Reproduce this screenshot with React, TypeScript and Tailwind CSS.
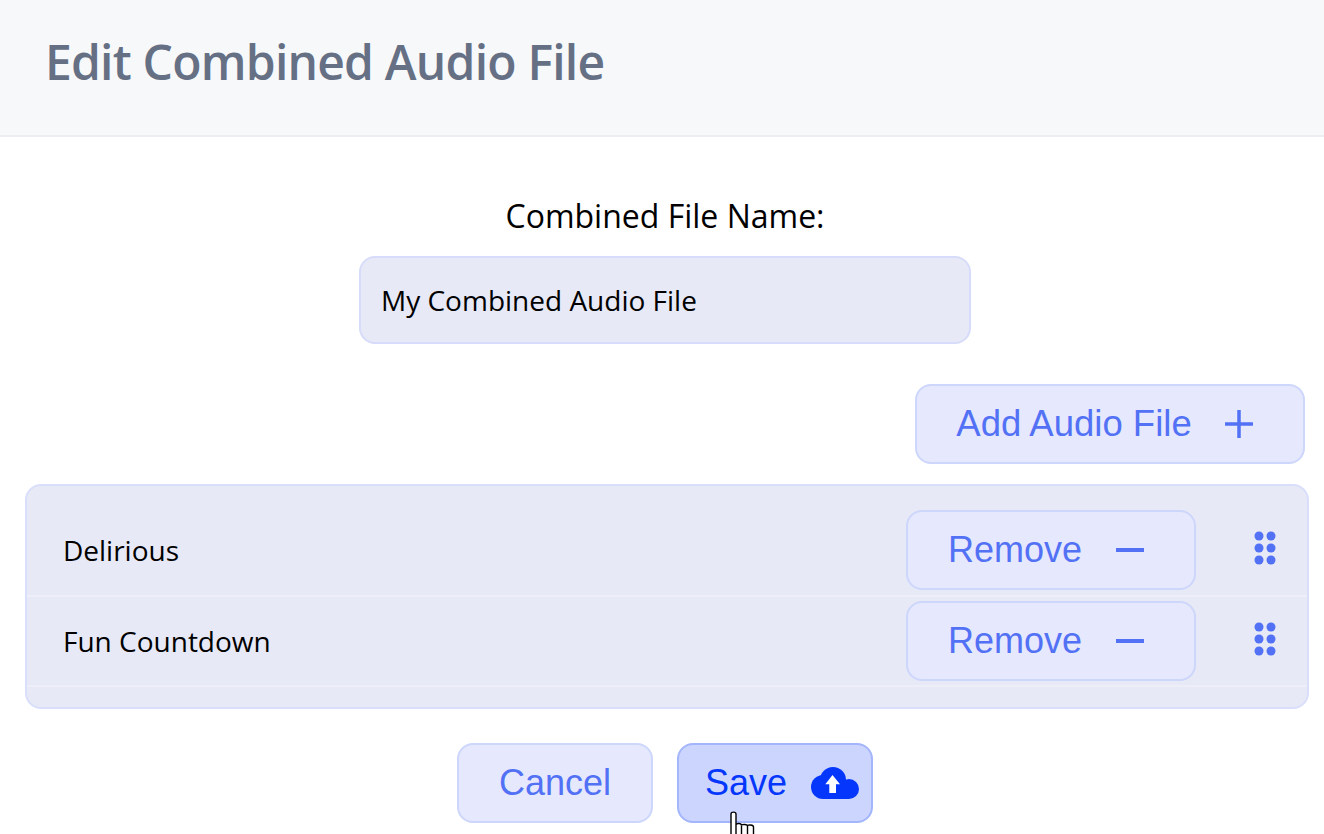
function Grip() {
  return (
    <svg width="22" height="34" viewBox="0 0 22 34" className="text-[#5271f5]" fill="currentColor">
      <circle cx="5" cy="5" r="4.5" />
      <circle cx="17" cy="5" r="4.5" />
      <circle cx="5" cy="17" r="4.5" />
      <circle cx="17" cy="17" r="4.5" />
      <circle cx="5" cy="29" r="4.5" />
      <circle cx="17" cy="29" r="4.5" />
    </svg>
  );
}

function Minus() {
  return <span className="block h-1 w-7 bg-[#5271f5]" />;
}

function Plus() {
  return (
    <svg width="28" height="28" viewBox="0 0 28 28" fill="none" stroke="#5271f5" strokeWidth="3.5">
      <path d="M0 14h28M14 0v28" />
    </svg>
  );
}

function CloudUpload() {
  return (
    <svg width="48" height="32" viewBox="0 0 48 32" fill="currentColor">
      <circle cx="22" cy="13" r="13" />
      <circle cx="12" cy="20" r="12" />
      <circle cx="38" cy="22" r="10" />
      <rect x="12" y="16" width="26" height="16" />
      <path d="M21.500 8L29 17.300H25V26H18.300V17.300H14.300Z" fill="#fff" />
    </svg>
  );
}

function HandCursor() {
  return (
    <svg width="26" height="24" viewBox="0 0 26 24" className="absolute left-[729px] top-[811px]">
      <path
        d="M2 24V3C2 .5 7 .5 7 3V14C7 12 12.500 12 12.500 14.500C12.500 13 18.500 13 18.500 15C18.500 13.500 24.500 13.500 24.500 16V24Z"
        fill="#fff"
        stroke="#000"
        strokeWidth="1.4"
      />
      <path d="M7 14V24M12.500 14.500V24M18.500 15V24" fill="none" stroke="#000" strokeWidth="1.4" />
    </svg>
  );
}

function Row({ name, className }: { name: string; className: string }) {
  return (
    <div className={`flex items-start border-b-2 border-[#eeeef9] pl-[36px] pr-[31px] ${className}`}>
      <span className="h-20 flex-1 text-[28px] leading-[80px] text-black">{name}</span>
      <button className="flex h-20 w-[290px] items-center justify-center gap-[34px] rounded-2xl border-2 border-[#cdd6fb] bg-[#e6e8fd] pr-[10px] font-['Liberation_Sans',sans-serif] text-[36px] text-[#5271f5]">
        Remove
        <Minus />
      </button>
      <div className="ml-[58px] mt-[21px]">
        <Grip />
      </div>
    </div>
  );
}

export default function App() {
  return (
    <div className="relative h-[834px] w-[1324px] overflow-hidden bg-white font-['Open_Sans',sans-serif]">
      <header className="flex h-[137px] items-center border-b-2 border-[#eceef2] bg-[#f7f8fa] pb-[12px] pl-[45px]">
        <h1 className="text-[48px] font-semibold tracking-[-0.78px] text-[#667085]">Edit Combined Audio File</h1>
      </header>

      <div className="flex flex-col items-center pl-[6px] pt-[56px]">
        <label className="text-[32px] leading-[46px] text-black">Combined File Name:</label>
        <div className="mt-[17px] flex h-[88px] w-[612px] items-center rounded-2xl border-2 border-[#d6dcf9] bg-[#e8e9f6] pl-[20px] text-[28px] text-black">
          My Combined Audio File
        </div>
      </div>

      <div className="mt-10 flex justify-end pr-[19px]">
        <button className="flex h-20 w-[390px] items-center justify-center gap-[33px] rounded-2xl border-2 border-[#cdd6fb] bg-[#e6e8fd] pr-[11px] font-['Liberation_Sans',sans-serif] text-[36.5px] text-[#5271f5]">
          Add Audio File
          <Plus />
        </button>
      </div>

      <div className="ml-[25px] mr-[15px] mt-5 h-[225px] rounded-2xl border-2 border-[#d9dffb] bg-[#e8e9f6] pt-[24px]">
        <Row name="Delirious" className="pb-[5px]" />
        <Row name="Fun Countdown" className="pb-[4px] pt-[4px]" />
      </div>

      <div className="mt-[34px] flex justify-center gap-6 pl-[6px]">
        <button className="h-20 w-[196px] rounded-2xl border-2 border-[#cdd6fb] bg-[#e6e8fd] font-['Liberation_Sans',sans-serif] text-[36px] text-[#5271f5]">
          Cancel
        </button>
        <button className="flex h-20 w-[196px] items-center justify-end gap-[24px] rounded-2xl border-2 border-[#a3b5fb] bg-[#ccd5fe] pr-3 font-['Liberation_Sans',sans-serif] text-[36px] text-[#0437fb]">
          Save
          <CloudUpload />
        </button>
      </div>

      <HandCursor />
    </div>
  );
}
